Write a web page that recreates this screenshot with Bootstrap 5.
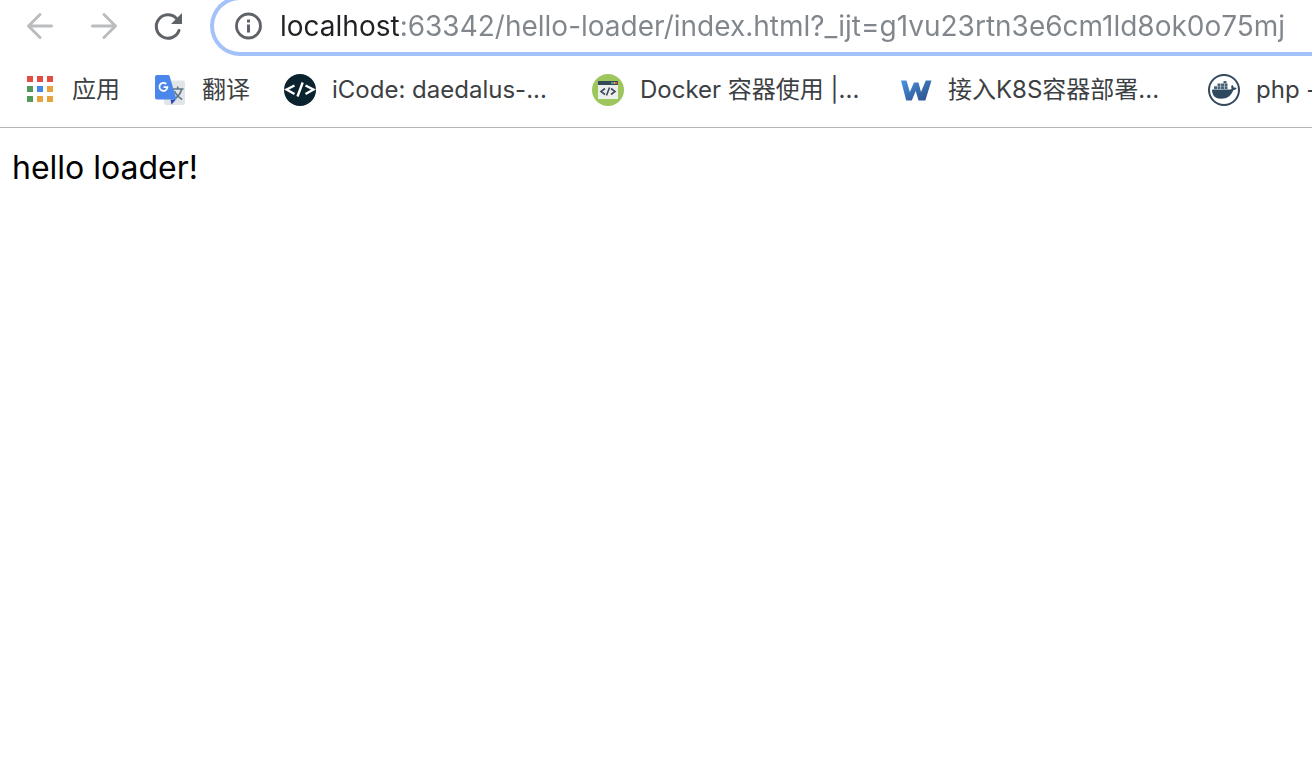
<!DOCTYPE html>
<html lang="zh-CN">
<head>
<meta charset="utf-8">
<meta name="viewport" content="width=device-width, initial-scale=1">
<title>hello loader</title>
<link href="https://cdn.jsdelivr.net/npm/bootstrap@5.3.0/dist/css/bootstrap.min.css" rel="stylesheet">
<style>
  body { font-family: Inter, "Noto Sans CJK SC", sans-serif; color: #000; background: #fff; }
  .toolbar { height: 56px; padding-left: 24px; gap: 26px; }
  .tool-group { gap: 32px; }
  .tool-btn { width: 32px; height: 60px; border: 0; color: #5f6368; }
  .tool-btn:disabled { color: #babcbe; opacity: 1; border: 0; }
  .omnibox { height: 60px; min-width: 0; border: 4px solid #a3c2f9; border-right: 0; border-radius: 30px 0 0 30px; padding-left: 20px; }
  .url-field {
    min-width: 0; height: 52px; font-size: 28px; line-height: 36px; border: 0; outline: 0; padding: 0;
    color: transparent; caret-color: #202124;
    background: linear-gradient(to right, #202124 120px, #80868b 120px);
    -webkit-background-clip: text; background-clip: text;
  }
  .bookmarks { height: 72px; padding: 0 0 4px 24px; gap: 32px; border-bottom: 1px solid #b5b5b5; }
  .bookmark { gap: 16px; font-size: 24px; line-height: 32px; color: #3c4043; }
  .bookmark-title { min-width: 50px; }
  .bookmark-title.long { width: 228px; }
  .greeting { font-size: 32px; line-height: 48px; padding: 16px 12px; }
</style>
</head>
<body>
<header>
  <nav class="toolbar d-flex align-items-end overflow-hidden" aria-label="Navigation">
    <div class="tool-group d-flex flex-shrink-0">
      <button type="button" class="tool-btn btn p-0" disabled aria-label="Back">
        <svg width="32" height="32" viewBox="0 0 32 32" fill="none" stroke="currentColor" stroke-width="3" stroke-linecap="round" stroke-linejoin="round"><path d="M27.500 16H4.500M16 4.500L4.500 16L16 27.500"/></svg>
      </button>
      <button type="button" class="tool-btn btn p-0" disabled aria-label="Forward">
        <svg width="32" height="32" viewBox="0 0 32 32" fill="none" stroke="currentColor" stroke-width="3" stroke-linecap="round" stroke-linejoin="round"><path d="M4.500 16H27.500M16 4.500L27.500 16L16 27.500"/></svg>
      </button>
      <button type="button" class="tool-btn btn p-0" aria-label="Reload">
        <svg width="32" height="32" viewBox="0 0 32 32" fill="none"><path d="M27 20.500A11.700 11.700 0 1 1 24.500 8.500" stroke="currentColor" stroke-width="3" stroke-linecap="round"/><path d="M30 3V14H19Z" fill="currentColor"/></svg>
      </button>
    </div>
    <div class="omnibox d-flex align-items-center flex-grow-1">
      <svg class="flex-shrink-0 me-3" width="30" height="30" viewBox="0 0 30 30" aria-hidden="true"><circle cx="14.500" cy="15" r="12" fill="none" stroke="#5f6368" stroke-width="2.800"/><path d="M13 8.500h3v3h-3zM13 13.500h3v8h-3z" fill="#5f6368"/></svg>
      <input class="url-field flex-grow-1" type="text" aria-label="Address" spellcheck="false" value="localhost:63342/hello-loader/index.html?_ijt=g1vu23rtn3e6cm1ld8ok0o75mj">
    </div>
  </nav>
  <nav class="bookmarks d-flex align-items-center overflow-hidden" aria-label="Bookmarks">
    <a href="#" class="bookmark d-flex align-items-center flex-shrink-0 text-decoration-none">
      <svg width="32" height="32" viewBox="0 0 32 32"><path fill="#e34c42" d="M3 2h6v6H3zM13 2h6v6h-6zM23 2h6v6h-6z"/><path fill="#52995c" d="M3 12h6v6H3zM3 22h6v6H3z"/><path fill="#4189e8" d="M13 12h6v6h-6z"/><path fill="#e6a53c" d="M23 12h6v6h-6zM13 22h6v6h-6zM23 22h6v6h-6z"/></svg>
      <span class="bookmark-title">应用</span>
    </a>
    <a href="#" class="bookmark d-flex align-items-center flex-shrink-0 text-decoration-none">
      <svg width="32" height="32" viewBox="0 0 32 32"><rect x="10" y="6.500" width="21" height="24.500" rx="2" fill="#e2e4e6"/><path d="M18.500 15h11M23.700 12.500V15M27.500 15.500c-1 4-4 7.500-7.500 10M20.500 17c1.500 3.500 4.500 6.500 7.500 8.500" fill="none" stroke="#5c7886" stroke-width="1.600"/><path d="M16.500 25.500H22L17.500 30.500z" fill="#3246ae"/><path d="M3 1H14.200a1.500 1.500 0 0 1 1.400 1L22.500 25.500H3a2 2 0 0 1-2-2V3a2 2 0 0 1 2-2z" fill="#4b86ec"/><path d="M12.200 10A4 4 0 1 0 13.400 13.200H9.600" fill="none" stroke="#fff" stroke-width="1.800"/></svg>
      <span class="bookmark-title">翻译</span>
    </a>
    <a href="#" class="bookmark d-flex align-items-center flex-shrink-0 text-decoration-none">
      <svg width="32" height="32" viewBox="0 0 32 32"><circle cx="16" cy="16" r="16" fill="#0b232e"/><path d="M10.500 11.500L2.500 15.500L10.500 20M21.500 11.500L29.500 15.500L21.500 20M18.700 8.500L13.500 22.500" fill="none" stroke="#fff" stroke-width="2.400"/></svg>
      <span class="bookmark-title long text-nowrap">iCode: daedalus-...</span>
    </a>
    <a href="#" class="bookmark d-flex align-items-center flex-shrink-0 text-decoration-none">
      <svg width="32" height="32" viewBox="0 0 32 32"><circle cx="16" cy="16" r="16" fill="#9dc65c"/><path d="M6 7h20v18H6z" fill="#eeefed"/><path d="M6 7h20v4H6z" fill="#34495a"/><path d="M19 8h2v2h-2z" fill="#4b9fa5"/><path d="M21.500 8h2v2h-2z" fill="#d9b83f"/><path d="M24 8h1.500v2H24z" fill="#d65249"/><path d="M13 14.500L9 17.500L13 20.500M19 14.500L23 17.500L19 20.500M17.500 13.500L14.500 21.500" fill="none" stroke="#3c4e5e" stroke-width="1.600"/></svg>
      <span class="bookmark-title long text-nowrap">Docker 容器使用 |...</span>
    </a>
    <a href="#" class="bookmark d-flex align-items-center flex-shrink-0 text-decoration-none">
      <svg width="32" height="32" viewBox="0 0 32 32"><defs><linearGradient id="wps" x1="0" y1="0" x2="1" y2="1"><stop offset="0" stop-color="#4a94e4"/><stop offset=".6" stop-color="#3768a8"/><stop offset="1" stop-color="#284d86"/></linearGradient></defs><path d="M1 6.500H6.500L9.800 18L14 8.500H18.500L21 18L25.800 6.500H31.500L25.300 26.500H18.500L15.700 17L11.800 26.500H6.200Z" fill="url(#wps)"/></svg>
      <span class="bookmark-title long text-nowrap">接入K8S容器部署...</span>
    </a>
    <a href="#" class="bookmark d-flex align-items-center flex-shrink-0 text-decoration-none">
      <svg width="32" height="32" viewBox="0 0 32 32"><circle cx="16" cy="16" r="15" fill="#fff" stroke="#35495c" stroke-width="2"/><path d="M4 15.500H22.500C23.500 15.500 23.800 14.800 23.300 13.500C23 12.500 23.300 11.700 24.200 11C25.200 11.700 25.700 12.700 25.700 13.700C26.800 13.400 28 13.600 28.700 14.100C28 15.600 26.800 16.200 25.200 16.200C23.300 21.500 19.500 24.700 13 24.700C7.500 24.700 4 21.700 4 15.500Z" fill="#2f4a60"/><path d="M6 12.300h3v2.700H6zM9.500 12.300h3v2.700h-3zM13 12.300h3v2.700h-3zM16.500 12.300h3v2.700h-3zM9.500 9.600h3v2.300h-3zM13 9.600h3v2.300h-3zM15.500 7h3v2.300h-3zM16.500 9.600h3v2.300h-3z" fill="#48637a"/></svg>
      <span class="bookmark-title text-nowrap">php -</span>
    </a>
  </nav>
</header>
<main class="greeting">hello loader!</main>
<script src="https://cdn.jsdelivr.net/npm/bootstrap@5.3.0/dist/js/bootstrap.bundle.min.js"></script>
</body>
</html>
